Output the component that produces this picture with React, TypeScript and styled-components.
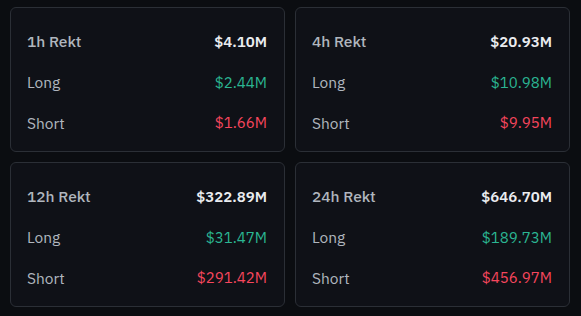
import React from 'react';
import styled, {createGlobalStyle} from 'styled-components';

const GlobalStyle = createGlobalStyle`
    html, body {
        margin:0;
        padding:0;
        background:#0b0d11;
    }
    body{
        font-family:"IBM Plex Sans", "Noto Sans", Roboto, sans-serif;
    }
`;

const Grid = styled.div`
    display:grid;
    grid-template-columns:275px 275px;
    gap:10px;
    padding:7px 11px 9px 10px;
`;

const Card = styled.div`
    box-sizing:border-box;
    height:145px;
    background:#0f1117;
    border:1px solid #2b2f36;
    border-radius:6px;
    padding:13px 17px 8px 16px;
    display:flex;
    flex-direction:column;
`;

const Row = styled.div`
    height:41px;
    display:flex;
    align-items:center;
    justify-content:space-between;
    font-size:15.5px;
`;

const Label = styled.span<{$head?:boolean}>`
    color:#b0b6be;
    font-weight:${p => p.$head ? 500 : 400};
`;

const Value = styled.span<{$tone:'white'|'green'|'red'}>`
    font-size:15px;
    font-weight:${p => p.$tone === 'white' ? 600 : 400};
    color:${p => p.$tone === 'green' ? '#2bb592' : p.$tone === 'red' ? '#f6465d' : '#eaecef'};
`;

type Stat = {
    period:string,
    total:string,
    long:string,
    short:string
}

const stats:Stat[] = [
    {period:'1h', total:'$4.10M', long:'$2.44M', short:'$1.66M'},
    {period:'4h', total:'$20.93M', long:'$10.98M', short:'$9.95M'},
    {period:'12h', total:'$322.89M', long:'$31.47M', short:'$291.42M'},
    {period:'24h', total:'$646.70M', long:'$189.73M', short:'$456.97M'},
];

const App = () => {
    return(
        <>
            <GlobalStyle/>
            <Grid>
                {stats.map(s => (
                    <Card key={s.period}>
                        <Row>
                            <Label $head>{s.period} Rekt</Label>
                            <Value $tone='white'>{s.total}</Value>
                        </Row>
                        <Row>
                            <Label>Long</Label>
                            <Value $tone='green'>{s.long}</Value>
                        </Row>
                        <Row>
                            <Label>Short</Label>
                            <Value $tone='red'>{s.short}</Value>
                        </Row>
                    </Card>
                ))}
            </Grid>
        </>
    )
}

export default App;
